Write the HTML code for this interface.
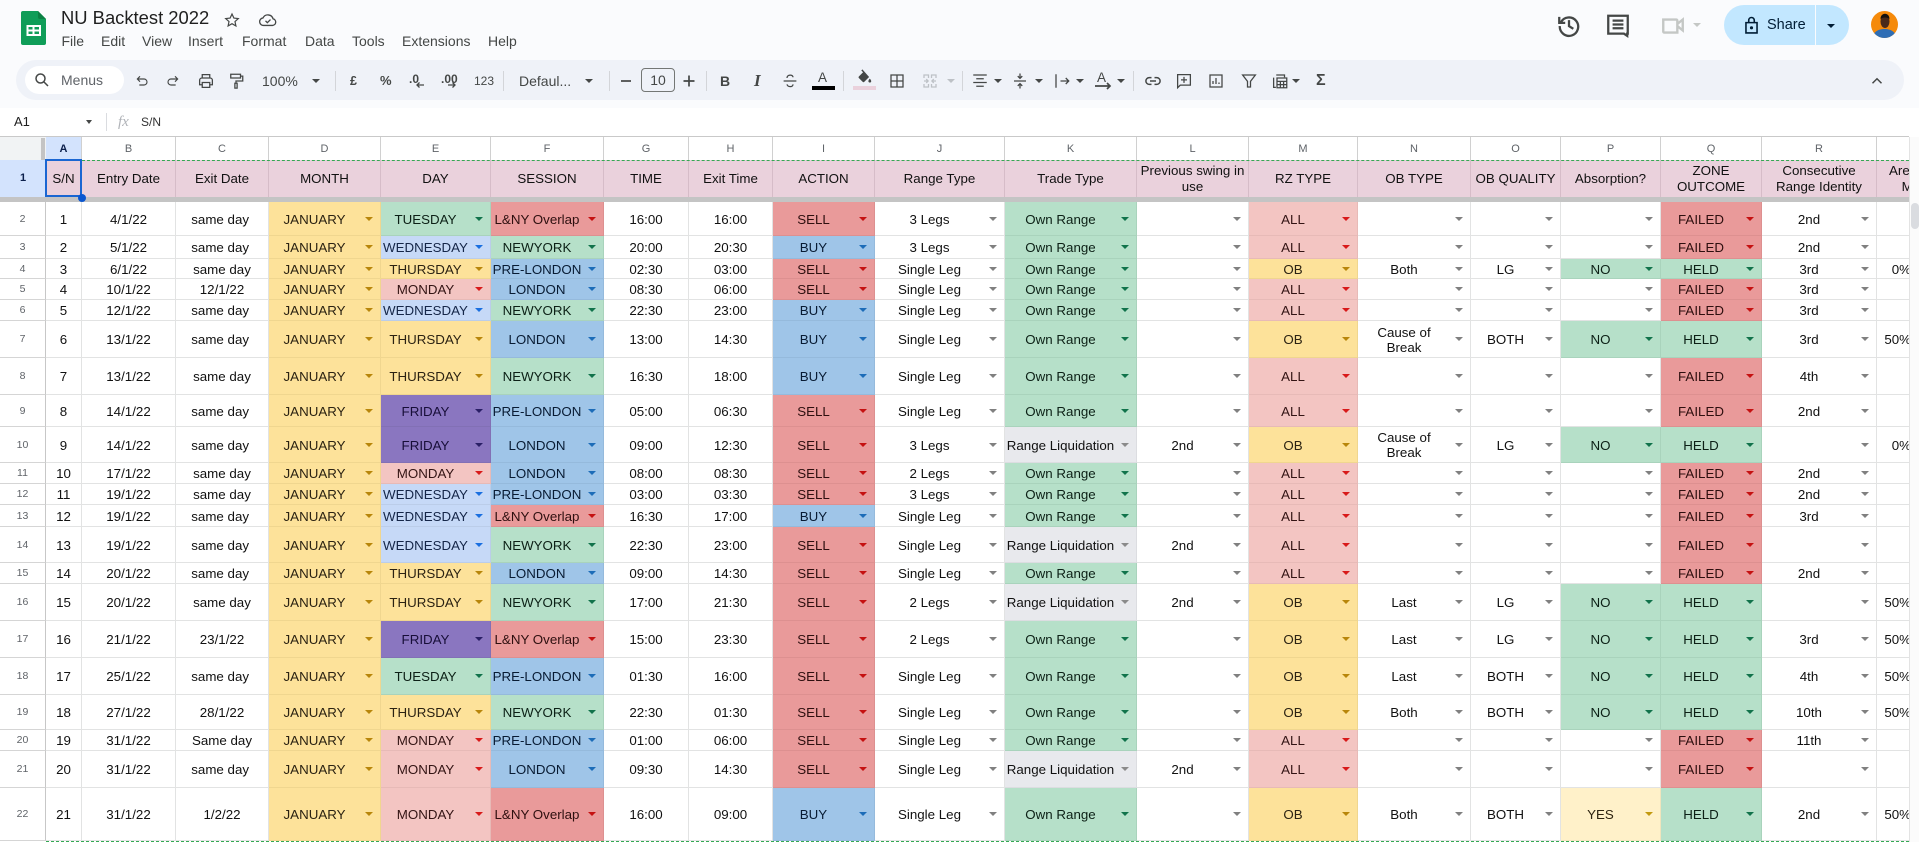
<!DOCTYPE html>
<html lang="en"><head><meta charset="utf-8"><title>NU Backtest 2022</title>
<style>
*{box-sizing:border-box}
html,body{margin:0;padding:0;width:1919px;height:842px;overflow:hidden;background:#fff;font-family:"Liberation Sans",Arial,sans-serif}
#top{position:absolute;left:0;top:0;width:1919px;height:108px;background:#fafbfd}
#pill{position:absolute;left:16px;top:60px;width:1888px;height:40px;border-radius:20px;background:#eff2f8}
#srch{position:absolute;left:25px;top:66px;width:99px;height:28px;border-radius:14px;background:#fff}
.x{position:absolute;white-space:nowrap;color:#444746;line-height:20px;font-size:14px}
.m{top:31px;color:#444746}
.q{top:71px}
.sep{position:absolute;top:71px;width:1px;height:20px;background:#d3d5d9}
.k{position:absolute;display:block;width:0;height:0;border-left:4px solid transparent;border-right:4px solid transparent;border-top:4px solid #444746;margin-left:-4px}
svg{position:absolute;fill:none;stroke:#444746;stroke-width:1.7}
#g{position:absolute;left:0;top:137px;width:1909px;height:705px;overflow:hidden;font-size:13.33px;color:#111}
#g>div{display:grid;grid-template-columns:46px 36px 94px 93px 112px 110px 113px 85px 84px 102px 130px 132px 112px 109px 113px 90px 100px 101px 115px 68px;width:1945px}
#g>div:nth-child(n+4) i{padding-top:1px}
i{font-style:normal;display:flex;align-items:center;justify-content:center;text-align:center;white-space:nowrap;position:relative;border-right:1px solid #e2e3e3;border-bottom:1px solid #e2e3e3;overflow:hidden}
.a{padding-right:3.7px}
.h{font-size:10.5px;color:#5f6368;padding-bottom:1px;border-right:1px solid #c7c7c7;border-bottom:1px solid #d5d5d5}
.z{justify-content:flex-end;padding-right:33px}
.v{font-size:11px;color:#5f6368;background:#fff;border-right:1px solid #d0d0d0;border-bottom:0}
.t{background:#ead1dc;border-right:1px solid #d6bcc8;border-bottom:0;line-height:16px;color:#111}
i[class]:not(.a,.h,.z,.v,.t){padding-right:20px}
i[class]:not(.a,.h,.z,.v,.t)::after{content:"";position:absolute;right:7px;top:50%;margin-top:-2px;border-left:4px solid transparent;border-right:4px solid transparent;border-top:4.5px solid var(--a,#808080)}
.y{background:#fde29a;color:#2b2212;--a:#b8860b;border-color:#f0d68f}
.g{background:#b6e0c9;color:#0c2016;--a:#11734b;border-color:#a9d3bc}
.r{background:#e99a9a;color:#2e0f0f;--a:#c51111;border-color:#dd9090}
.l{background:#f3c5c2;color:#331414;--a:#d81a1a;border-color:#e7bab7}
.b{background:#9fc5e8;color:#081b33;--a:#1c6cb8;border-color:#95badc}
.w{background:#c6d9f7;color:#152648;--a:#1a6fe0;border-color:#bbcde9}
.p{background:#8a76c0;color:#170e38;--a:#2a1f66;border-color:#8270b5}
.e{background:#e8e9ed;color:#111;--a:#8a8a8a;border-color:#dcdde1}
.c{background:#fff1c9;color:#2e2410;--a:#c39a10;border-color:#f1e4bd}
</style></head><body>
<div id="top"></div><div id="pill"></div><div id="srch"></div>

<svg style="left:21px;top:11px;stroke:none" width="25" height="34" viewBox="0 0 25 34"><path fill="#0f9d58" d="M2 0H17L25 8V32a2 2 0 0 1-2 2H2a2 2 0 0 1-2-2V2a2 2 0 0 1 2-2z"/><path fill="#0b8043" d="M17 0L25 8H19a2 2 0 0 1-2-2z"/><path fill="#fff" d="M5.500 14H20V25H5.500z"/><path fill="#0f9d58" d="M7.500 16h4v2.500h-4zM13.500 16h4.500v2.500h-4.500zM7.500 20.500h4v2.500h-4zM13.500 20.500h4.500v2.500h-4.500z"/></svg>
<span class="x" style="left:61px;top:7px;font-size:18.4px;line-height:22px;color:#1f1f1f">NU Backtest 2022</span>
<svg style="left:223px;top:11px;stroke-width:1.6" width="18" height="18" viewBox="0 0 24 24"><path d="M12 4l2.500 5.400 5.900.7-4.400 4 1.200 5.800-5.200-3-5.200 3 1.200-5.800-4.400-4 5.900-.7z"/></svg>
<svg style="left:258px;top:10px;stroke-width:1.6" width="20" height="20" viewBox="0 0 24 24"><path d="M7 18.500h10.500a4 4 0 0 0 .6-7.900A6.500 6.500 0 0 0 6 9.500a4.500 4.500 0 0 0 1 9z"/><path d="M9 13l2.200 2.200L15 11.500"/></svg>

<span class="x m" style="left:61.500px">File</span><span class="x m" style="left:101px">Edit</span><span class="x m" style="left:142px">View</span><span class="x m" style="left:188px">Insert</span><span class="x m" style="left:242px">Format</span><span class="x m" style="left:305px">Data</span><span class="x m" style="left:352px">Tools</span><span class="x m" style="left:402px">Extensions</span><span class="x m" style="left:488px">Help</span>

<svg style="left:33px;top:71px;stroke-width:2" width="18" height="18" viewBox="0 0 24 24"><circle cx="10" cy="10" r="6"/><path d="M14.500 14.500L20 20"/></svg>
<span class="x q" style="left:61px;top:70px;color:#5f6368">Menus</span>
<svg style="left:134px;top:73px" width="16" height="16" viewBox="0 0 24 24"><path d="M9 5L5 9l4 4M5 9h10a4.500 4.500 0 0 1 0 9H8"/></svg>
<svg style="left:165px;top:73px" width="16" height="16" viewBox="0 0 24 24"><path d="M15 5l4 4-4 4M19 9H9a4.500 4.500 0 0 0 0 9h7"/></svg>
<svg style="left:197px;top:72px" width="18" height="18" viewBox="0 0 24 24"><path d="M7 8V3.500h10V8M7 17H3.500v-6a3 3 0 0 1 3-3h11a3 3 0 0 1 3 3v6H17M7 14h10v6.500H7z"/></svg>
<svg style="left:227px;top:72px" width="18" height="18" viewBox="0 0 24 24"><path d="M5 3h13v5H5zM18 5.500h3v6.500h-9v3M10.500 15h3v6.500h-3z"/></svg>
<span class="x q" style="left:262px">100%</span><b class="k" style="left:316px;top:79px"></b>
<div class="sep" style="left:335px"></div>
<span class="x q" style="left:350px;font-size:12.500px;font-weight:bold">£</span>
<span class="x q" style="left:380px;font-size:13px;font-weight:bold">%</span>
<span class="x q" style="left:409px;font-size:12px;top:69px;font-weight:bold">.0</span>
<svg style="left:415px;top:80px;stroke-width:1.300" width="10" height="10" viewBox="0 0 10 10"><path d="M9 5H2M4.500 2.500L2 5l2.500 2.500"/></svg>
<span class="x q" style="left:441px;font-size:12px;top:69px;font-weight:bold">.00</span>
<svg style="left:447px;top:80px;stroke-width:1.300" width="10" height="10" viewBox="0 0 10 10"><path d="M1 5h7M5.500 2.500L8 5 5.500 7.500"/></svg>
<span class="x q" style="left:474px;font-size:12px">123</span>
<div class="sep" style="left:503px"></div>
<span class="x q" style="left:519px">Defaul...</span><b class="k" style="left:589px;top:79px"></b>
<div class="sep" style="left:609px"></div>
<svg style="left:619px;top:72px" width="14" height="18" viewBox="0 0 14 18"><path d="M2 9h10"/></svg>
<div style="position:absolute;left:641px;top:68px;width:34px;height:24px;border:1px solid #747775;border-radius:4px;text-align:center;font-size:14px;line-height:22px;color:#444746">10</div>
<svg style="left:682px;top:72px" width="14" height="18" viewBox="0 0 14 18"><path d="M1.500 9h11M7 3.500v11"/></svg>
<div class="sep" style="left:706px"></div>
<span class="x q" style="left:720px;font-weight:bold;font-size:14px">B</span>
<span class="x q" style="left:754px;font-style:italic;font-family:'Liberation Serif',serif;font-size:17px;font-weight:bold">I</span>
<svg style="left:781px;top:72px" width="18" height="18" viewBox="0 0 24 24"><path d="M3.500 12h17M8 8c0-5 8-5 8-1M8 16.500c1 4 8 4 8 0"/></svg>
<span class="x q" style="left:818px;font-size:13.500px;top:68px">A</span><div style="position:absolute;left:812px;top:86px;width:23px;height:4px;background:#000"></div>
<div class="sep" style="left:843px"></div>
<svg style="left:856px;top:68px;fill:#444746;stroke:none" width="17" height="17" viewBox="0 0 24 24"><path d="M9 2l-1.500 1.500 2.500 2.500-6 6a1.500 1.500 0 0 0 0 2.100l5.500 5.500a1.500 1.500 0 0 0 2.100 0l6.900-6.900zM19.500 15s-2 2.200-2 3.500a2 2 0 0 0 4 0c0-1.300-2-3.500-2-3.500z"/></svg>
<div style="position:absolute;left:853px;top:86px;width:23px;height:4px;background:#ead1dc"></div>
<svg style="left:888px;top:72px" width="18" height="18" viewBox="0 0 24 24"><path d="M4 4h16v16H4zM12 4v16M4 12h16"/></svg>
<svg style="left:921px;top:72px;stroke:#bdc1c6" width="18" height="18" viewBox="0 0 24 24"><path d="M4 8V4h6v4M14 8V4h6v4M4 16v4h6v-4M14 16v4h6v-4M4 12h5M20 12h-5M7 9.500L9.500 12 7 14.500M17 9.500L14.500 12l2.500 2.500"/></svg>
<b class="k" style="left:951px;top:79px;border-top-color:#bdc1c6"></b>
<div class="sep" style="left:962px"></div>
<svg style="left:971px;top:72px" width="18" height="18" viewBox="0 0 24 24"><path d="M3 4h18M7 9h10M3 14h18M7 19h10"/></svg><b class="k" style="left:998px;top:79px"></b>
<svg style="left:1011px;top:72px" width="18" height="18" viewBox="0 0 24 24"><path d="M4 12h16M12 2v6M9 5.500L12 8.500l3-3M12 22v-6M9 18.500l3-3 3 3"/></svg><b class="k" style="left:1039px;top:79px"></b>
<svg style="left:1053px;top:72px" width="18" height="18" viewBox="0 0 24 24"><path d="M4 3v18M13 12h-3M10 12h11M17 8l4 4-4 4"/></svg><b class="k" style="left:1080px;top:79px"></b>
<span class="x q" style="left:1097px;font-size:13.500px;top:68px">A</span><svg style="left:1094px;top:80px" width="18" height="12" viewBox="0 0 18 12"><path d="M1 6h15M13 3l3 3-3 3"/></svg><b class="k" style="left:1121px;top:79px"></b>
<div class="sep" style="left:1133px"></div>
<svg style="left:1144px;top:72px;stroke-width:2" width="18" height="18" viewBox="0 0 24 24"><path d="M10 7.500H7a4.500 4.500 0 0 0 0 9h3M14 7.500h3a4.500 4.500 0 0 1 0 9h-3M8 12h8"/></svg>
<svg style="left:1175px;top:72px" width="18" height="18" viewBox="0 0 24 24"><path d="M3.500 3.500h17v14H7l-3.500 3.500zM12 6.500v8M8 10.500h8"/></svg>
<svg style="left:1207px;top:72px" width="18" height="18" viewBox="0 0 24 24"><path d="M4 4h16v16H4zM8 16v-4M12 16V8M16 16v-2"/></svg>
<svg style="left:1240px;top:72px" width="18" height="18" viewBox="0 0 24 24"><path d="M3.500 4h17L14 12.500V20h-4v-7.500z"/></svg>
<svg style="left:1271px;top:72px" width="18" height="18" viewBox="0 0 24 24"><path d="M7 4h11v3M3.500 7.500v13h3M8 8h13v13H8zM8 12.500h13M8 16.800h13M12.500 12.500V21M16.800 12.500V21"/></svg><b class="k" style="left:1296px;top:79px"></b>
<span class="x q" style="left:1316px;font-size:16px;font-weight:bold">Σ</span>
<svg style="left:1868px;top:72px;stroke-width:2" width="18" height="18" viewBox="0 0 24 24"><path d="M6 15l6-6 6 6"/></svg>

<svg style="left:1556px;top:12px;stroke-width:2.100" width="26" height="26" viewBox="0 0 24 24"><path d="M4.500 9.500A8.500 8.500 0 1 1 3.500 13M3 4.500v5.500h5.500M12 7.500V13l4 2.500"/></svg>
<svg style="left:1605px;top:12px;stroke-width:2.100" width="26" height="26" viewBox="0 0 24 24"><path d="M3 3.500h18v16.500h-.5v2l-3-2H3zM7 8h10M7 11.500h10M7 15h10"/></svg>
<svg style="left:1660px;top:12px;stroke:#c4c7c5;stroke-width:2.200" width="26" height="26" viewBox="0 0 24 24"><path d="M3 7h12a1 1 0 0 1 1 1v11H4a1 1 0 0 1-1-1zM16 11l5-4v10l-5-4"/></svg>
<b class="k" style="left:1697px;top:23px;border-top-color:#c4c7c5"></b>
<div style="position:absolute;left:1724px;top:5px;width:91px;height:40px;background:#c2e7ff;border-radius:20px 0 0 20px"></div>
<div style="position:absolute;left:1816px;top:5px;width:33px;height:40px;background:#c2e7ff;border-radius:0 20px 20px 0"></div>
<svg style="left:1742px;top:15px;stroke:#001d35;stroke-width:2" width="19" height="20" viewBox="0 0 24 24"><path d="M5 9h14v13H5zM8.500 9V6a3.500 3.500 0 0 1 7 0v3"/><circle cx="12" cy="15.500" r="1" fill="#001d35"/></svg>
<span class="x" style="left:1767px;top:15px;color:#001d35;font-size:14.500px">Share</span>
<b class="k" style="left:1831px;top:24px;border-top-color:#001d35"></b>
<svg style="left:1871px;top:11px;stroke:none" width="27" height="27" viewBox="0 0 27 27"><defs><clipPath id="cp"><circle cx="13.500" cy="13.500" r="13.500"/></clipPath></defs><g clip-path="url(#cp)"><rect width="27" height="27" fill="#f58a0b"/><path fill="#2e6db5" d="M2 27c0-6 5-9 11.500-9S25 21 25 27z"/><ellipse cx="14" cy="10.500" rx="4.500" ry="6.500" fill="#4a2a1a"/><path fill="#16110e" d="M9.500 8c0-7 9-7 9 0-2-2-7-2-9 0z"/></g></svg>

<span class="x" style="left:14px;top:112px;font-size:13px;color:#1f1f1f">A1</span>
<b class="k" style="left:90px;top:120px;border-left-width:3.500px;border-right-width:3.500px"></b>
<div style="position:absolute;left:106px;top:113px;width:1px;height:18px;background:#dadce0"></div>
<span class="x" style="left:118px;top:112px;font-size:15px;font-family:'Liberation Serif',serif;font-style:italic;color:#b0b3b8">fx</span>
<span class="x" style="left:141px;top:112px;font-size:12px;color:#333">S/N</span>
<div style="position:absolute;left:0;top:136px;width:1909px;height:2px;background:#c9c9c9"></div>

<div id="g">
<div style="height:23px"><i class="v" style="background:#f1f3f4;border-right:0"></i><i class="v" style="background:#d3e3fd;font-weight:bold;color:#0b1f4b">A</i><i class="v">B</i><i class="v">C</i><i class="v">D</i><i class="v">E</i><i class="v">F</i><i class="v">G</i><i class="v">H</i><i class="v">I</i><i class="v">J</i><i class="v">K</i><i class="v">L</i><i class="v">M</i><i class="v">N</i><i class="v">O</i><i class="v">P</i><i class="v">Q</i><i class="v">R</i><i class="v"></i></div>
<div style="height:37px"><i class="h" style="background:#d3e3fd;font-weight:bold;color:#0b1f4b;border:0;font-size:11px">1</i><i class="t">S/N</i><i class="t">Entry Date</i><i class="t">Exit Date</i><i class="t">MONTH</i><i class="t">DAY</i><i class="t">SESSION</i><i class="t">TIME</i><i class="t">Exit Time</i><i class="t">ACTION</i><i class="t">Range Type</i><i class="t">Trade Type</i><i class="t">Previous swing in<br>use</i><i class="t">RZ TYPE</i><i class="t">OB TYPE</i><i class="t">OB QUALITY</i><i class="t">Absorption?</i><i class="t">ZONE<br>OUTCOME</i><i class="t">Consecutive<br>Range Identity</i><i class="t">Area of<br>Mit</i></div>
<div style="height:5px;background:#c4c4c4;width:1909px"></div>
<div style="height:34px"><i class=h>2</i><i>1</i><i>4/1/22</i><i class=a>same day</i><i class=y>JANUARY</i><i class=g>TUESDAY</i><i class=r>L&amp;NY Overlap</i><i>16:00</i><i>16:00</i><i class=r>SELL</i><i class=d>3 Legs</i><i class=g>Own Range</i><i class=d></i><i class=l>ALL</i><i class=d></i><i class=d></i><i class=d></i><i class=r>FAILED</i><i class=d>2nd</i><i></i></div>
<div style="height:23px"><i class=h>3</i><i>2</i><i>5/1/22</i><i class=a>same day</i><i class=y>JANUARY</i><i class=w>WEDNESDAY</i><i class=g>NEWYORK</i><i>20:00</i><i>20:30</i><i class=b>BUY</i><i class=d>3 Legs</i><i class=g>Own Range</i><i class=d></i><i class=l>ALL</i><i class=d></i><i class=d></i><i class=d></i><i class=r>FAILED</i><i class=d>2nd</i><i></i></div>
<div style="height:20px"><i class=h>4</i><i>3</i><i>6/1/22</i><i>same day</i><i class=y>JANUARY</i><i class=y>THURSDAY</i><i class=b>PRE-LONDON</i><i>02:30</i><i>03:00</i><i class=r>SELL</i><i class=d>Single Leg</i><i class=g>Own Range</i><i class=d></i><i class=y>OB</i><i class=d>Both</i><i class=d>LG</i><i class=g>NO</i><i class=g>HELD</i><i class=d>3rd</i><i class=z>0%</i></div>
<div style="height:21px"><i class=h>5</i><i>4</i><i>10/1/22</i><i>12/1/22</i><i class=y>JANUARY</i><i class=l>MONDAY</i><i class=b>LONDON</i><i>08:30</i><i>06:00</i><i class=r>SELL</i><i class=d>Single Leg</i><i class=g>Own Range</i><i class=d></i><i class=l>ALL</i><i class=d></i><i class=d></i><i class=d></i><i class=r>FAILED</i><i class=d>3rd</i><i></i></div>
<div style="height:21px"><i class=h>6</i><i>5</i><i>12/1/22</i><i class=a>same day</i><i class=y>JANUARY</i><i class=w>WEDNESDAY</i><i class=g>NEWYORK</i><i>22:30</i><i>23:00</i><i class=b>BUY</i><i class=d>Single Leg</i><i class=g>Own Range</i><i class=d></i><i class=l>ALL</i><i class=d></i><i class=d></i><i class=d></i><i class=r>FAILED</i><i class=d>3rd</i><i></i></div>
<div style="height:37px"><i class=h>7</i><i>6</i><i>13/1/22</i><i class=a>same day</i><i class=y>JANUARY</i><i class=y>THURSDAY</i><i class=b>LONDON</i><i>13:00</i><i>14:30</i><i class=b>BUY</i><i class=d>Single Leg</i><i class=g>Own Range</i><i class=d></i><i class=y>OB</i><i class=d>Cause of<br>Break</i><i class=d>BOTH</i><i class=g>NO</i><i class=g>HELD</i><i class=d>3rd</i><i class=z>50%</i></div>
<div style="height:37px"><i class=h>8</i><i>7</i><i>13/1/22</i><i>same day</i><i class=y>JANUARY</i><i class=y>THURSDAY</i><i class=g>NEWYORK</i><i>16:30</i><i>18:00</i><i class=b>BUY</i><i class=d>Single Leg</i><i class=g>Own Range</i><i class=d></i><i class=l>ALL</i><i class=d></i><i class=d></i><i class=d></i><i class=r>FAILED</i><i class=d>4th</i><i></i></div>
<div style="height:32px"><i class=h>9</i><i>8</i><i>14/1/22</i><i class=a>same day</i><i class=y>JANUARY</i><i class=p>FRIDAY</i><i class=b>PRE-LONDON</i><i>05:00</i><i>06:30</i><i class=r>SELL</i><i class=d>Single Leg</i><i class=g>Own Range</i><i class=d></i><i class=l>ALL</i><i class=d></i><i class=d></i><i class=d></i><i class=r>FAILED</i><i class=d>2nd</i><i></i></div>
<div style="height:36px"><i class=h>10</i><i>9</i><i>14/1/22</i><i class=a>same day</i><i class=y>JANUARY</i><i class=p>FRIDAY</i><i class=b>LONDON</i><i>09:00</i><i>12:30</i><i class=r>SELL</i><i class=d>3 Legs</i><i class=e>Range Liquidation</i><i class=d>2nd</i><i class=y>OB</i><i class=d>Cause of<br>Break</i><i class=d>LG</i><i class=g>NO</i><i class=g>HELD</i><i class=d></i><i class=z>0%</i></div>
<div style="height:21px"><i class=h>11</i><i>10</i><i>17/1/22</i><i>same day</i><i class=y>JANUARY</i><i class=l>MONDAY</i><i class=b>LONDON</i><i>08:00</i><i>08:30</i><i class=r>SELL</i><i class=d>2 Legs</i><i class=g>Own Range</i><i class=d></i><i class=l>ALL</i><i class=d></i><i class=d></i><i class=d></i><i class=r>FAILED</i><i class=d>2nd</i><i></i></div>
<div style="height:21px"><i class=h>12</i><i>11</i><i>19/1/22</i><i>same day</i><i class=y>JANUARY</i><i class=w>WEDNESDAY</i><i class=b>PRE-LONDON</i><i>03:00</i><i>03:30</i><i class=r>SELL</i><i class=d>3 Legs</i><i class=g>Own Range</i><i class=d></i><i class=l>ALL</i><i class=d></i><i class=d></i><i class=d></i><i class=r>FAILED</i><i class=d>2nd</i><i></i></div>
<div style="height:22px"><i class=h>13</i><i>12</i><i>19/1/22</i><i class=a>same day</i><i class=y>JANUARY</i><i class=w>WEDNESDAY</i><i class=r>L&amp;NY Overlap</i><i>16:30</i><i>17:00</i><i class=b>BUY</i><i class=d>Single Leg</i><i class=g>Own Range</i><i class=d></i><i class=l>ALL</i><i class=d></i><i class=d></i><i class=d></i><i class=r>FAILED</i><i class=d>3rd</i><i></i></div>
<div style="height:36px"><i class=h>14</i><i>13</i><i>19/1/22</i><i class=a>same day</i><i class=y>JANUARY</i><i class=w>WEDNESDAY</i><i class=g>NEWYORK</i><i>22:30</i><i>23:00</i><i class=r>SELL</i><i class=d>Single Leg</i><i class=e>Range Liquidation</i><i class=d>2nd</i><i class=l>ALL</i><i class=d></i><i class=d></i><i class=d></i><i class=r>FAILED</i><i class=d></i><i></i></div>
<div style="height:21px"><i class=h>15</i><i>14</i><i>20/1/22</i><i class=a>same day</i><i class=y>JANUARY</i><i class=y>THURSDAY</i><i class=b>LONDON</i><i>09:00</i><i>14:30</i><i class=r>SELL</i><i class=d>Single Leg</i><i class=g>Own Range</i><i class=d></i><i class=l>ALL</i><i class=d></i><i class=d></i><i class=d></i><i class=r>FAILED</i><i class=d>2nd</i><i></i></div>
<div style="height:37px"><i class=h>16</i><i>15</i><i>20/1/22</i><i>same day</i><i class=y>JANUARY</i><i class=y>THURSDAY</i><i class=g>NEWYORK</i><i>17:00</i><i>21:30</i><i class=r>SELL</i><i class=d>2 Legs</i><i class=e>Range Liquidation</i><i class=d>2nd</i><i class=y>OB</i><i class=d>Last</i><i class=d>LG</i><i class=g>NO</i><i class=g>HELD</i><i class=d></i><i class=z>50%</i></div>
<div style="height:37px"><i class=h>17</i><i>16</i><i>21/1/22</i><i>23/1/22</i><i class=y>JANUARY</i><i class=p>FRIDAY</i><i class=r>L&amp;NY Overlap</i><i>15:00</i><i>23:30</i><i class=r>SELL</i><i class=d>2 Legs</i><i class=g>Own Range</i><i class=d></i><i class=y>OB</i><i class=d>Last</i><i class=d>LG</i><i class=g>NO</i><i class=g>HELD</i><i class=d>3rd</i><i class=z>50%</i></div>
<div style="height:37px"><i class=h>18</i><i>17</i><i>25/1/22</i><i class=a>same day</i><i class=y>JANUARY</i><i class=g>TUESDAY</i><i class=b>PRE-LONDON</i><i>01:30</i><i>16:00</i><i class=r>SELL</i><i class=d>Single Leg</i><i class=g>Own Range</i><i class=d></i><i class=y>OB</i><i class=d>Last</i><i class=d>BOTH</i><i class=g>NO</i><i class=g>HELD</i><i class=d>4th</i><i class=z>50%</i></div>
<div style="height:35px"><i class=h>19</i><i>18</i><i>27/1/22</i><i>28/1/22</i><i class=y>JANUARY</i><i class=y>THURSDAY</i><i class=g>NEWYORK</i><i>22:30</i><i>01:30</i><i class=r>SELL</i><i class=d>Single Leg</i><i class=g>Own Range</i><i class=d></i><i class=y>OB</i><i class=d>Both</i><i class=d>BOTH</i><i class=g>NO</i><i class=g>HELD</i><i class=d>10th</i><i class=z>50%</i></div>
<div style="height:21px"><i class=h>20</i><i>19</i><i>31/1/22</i><i>Same day</i><i class=y>JANUARY</i><i class=l>MONDAY</i><i class=b>PRE-LONDON</i><i>01:00</i><i>06:00</i><i class=r>SELL</i><i class=d>Single Leg</i><i class=g>Own Range</i><i class=d></i><i class=l>ALL</i><i class=d></i><i class=d></i><i class=d></i><i class=r>FAILED</i><i class=d>11th</i><i></i></div>
<div style="height:37px"><i class=h>21</i><i>20</i><i>31/1/22</i><i class=a>same day</i><i class=y>JANUARY</i><i class=l>MONDAY</i><i class=b>LONDON</i><i>09:30</i><i>14:30</i><i class=r>SELL</i><i class=d>Single Leg</i><i class=e>Range Liquidation</i><i class=d>2nd</i><i class=l>ALL</i><i class=d></i><i class=d></i><i class=d></i><i class=r>FAILED</i><i class=d></i><i></i></div>
<div style="height:53px"><i class=h>22</i><i>21</i><i>31/1/22</i><i>1/2/22</i><i class=y>JANUARY</i><i class=l>MONDAY</i><i class=r>L&amp;NY Overlap</i><i>16:00</i><i>09:00</i><i class=b>BUY</i><i class=d>Single Leg</i><i class=g>Own Range</i><i class=d></i><i class=y>OB</i><i class=d>Both</i><i class=d>BOTH</i><i class=c>YES</i><i class=g>HELD</i><i class=d>2nd</i><i class=z>50%</i></div>
</div>

<div style="position:absolute;left:82px;top:160px;width:1827px;border-top:1px dashed #34a853"></div>
<div style="position:absolute;left:46px;top:841px;width:1863px;border-top:1px dashed #34a853"></div>
<div style="position:absolute;left:45px;top:159px;width:37px;height:38px;border:2px solid #1a66d2"></div>
<div style="position:absolute;left:78px;top:194px;width:8px;height:8px;border-radius:50%;background:#0b57d0"></div>
<div style="position:absolute;left:41px;top:138px;width:4px;height:22px;background:#c4c4c4"></div>
<div style="position:absolute;left:1909px;top:137px;width:10px;height:705px;background:#fbfbfb;border-left:1px solid #e3e3e3"></div>
<div style="position:absolute;left:1911px;top:203px;width:8px;height:26px;border-radius:4px;background:#dadce0"></div>
</body></html>
